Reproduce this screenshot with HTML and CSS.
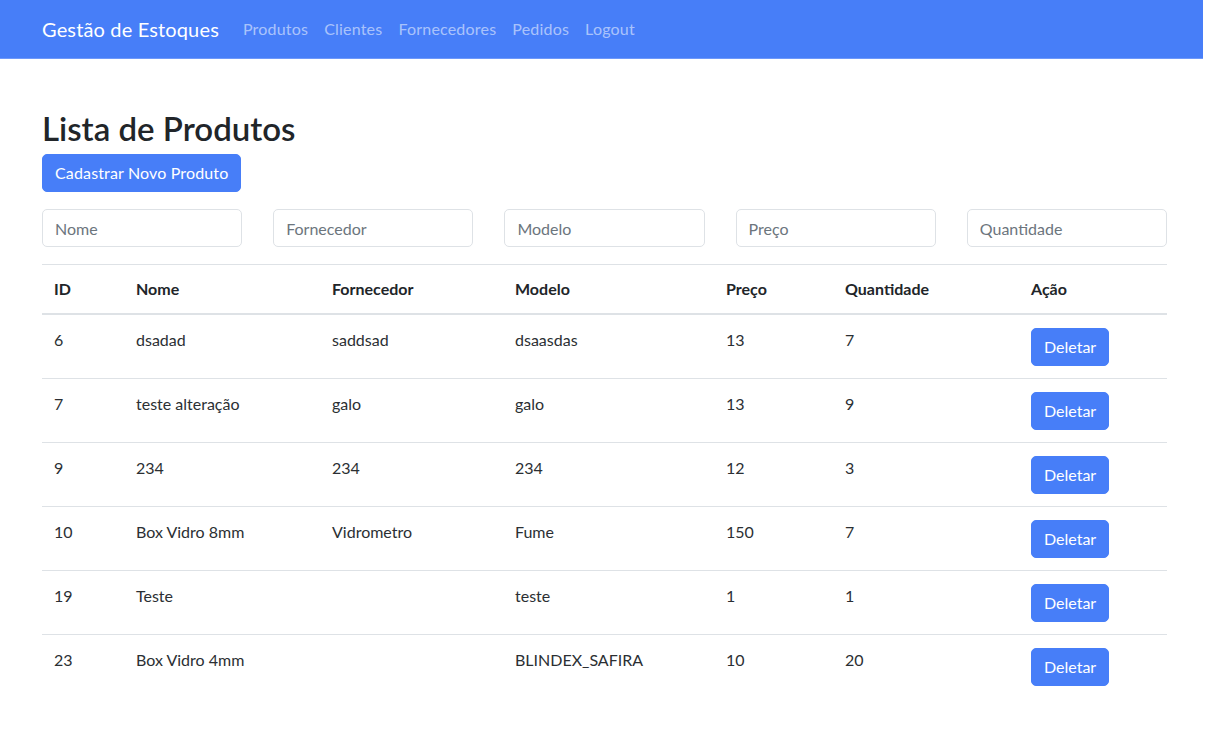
FILE: index.html
```html
<!DOCTYPE html>
<html lang="pt-BR">
<head>
<meta charset="utf-8">
<title>Gestão de Estoques</title>
<link rel="stylesheet" href="styles.css">
</head>
<body>
<nav class="navbar">
  <a class="brand" href="#">Gestão de Estoques</a>
  <ul class="nav-links">
    <li><a href="#">Produtos</a></li>
    <li><a href="#">Clientes</a></li>
    <li><a href="#">Fornecedores</a></li>
    <li><a href="#">Pedidos</a></li>
    <li><a href="#">Logout</a></li>
  </ul>
</nav>
<main class="container">
  <h1 class="title">Lista de Produtos</h1>
  <button class="btn btn-primary">Cadastrar Novo Produto</button>
  <div class="filters">
    <input class="field" type="text" placeholder="Nome">
    <input class="field" type="text" placeholder="Fornecedor">
    <input class="field" type="text" placeholder="Modelo">
    <input class="field" type="text" placeholder="Preço">
    <input class="field" type="text" placeholder="Quantidade">
  </div>
  <table class="table">
    <thead>
      <tr>
        <th class="c-id">ID</th>
        <th class="c-nome">Nome</th>
        <th class="c-forn">Fornecedor</th>
        <th class="c-modelo">Modelo</th>
        <th class="c-preco">Preço</th>
        <th class="c-qtd">Quantidade</th>
        <th class="c-acao">Ação</th>
      </tr>
    </thead>
    <tbody>
      <tr><td>6</td><td>dsadad</td><td>saddsad</td><td>dsaasdas</td><td>13</td><td>7</td><td><button class="btn btn-primary">Deletar</button></td></tr>
      <tr><td>7</td><td>teste alteração</td><td>galo</td><td>galo</td><td>13</td><td>9</td><td><button class="btn btn-primary">Deletar</button></td></tr>
      <tr><td>9</td><td>234</td><td>234</td><td>234</td><td>12</td><td>3</td><td><button class="btn btn-primary">Deletar</button></td></tr>
      <tr><td>10</td><td>Box Vidro 8mm</td><td>Vidrometro</td><td>Fume</td><td>150</td><td>7</td><td><button class="btn btn-primary">Deletar</button></td></tr>
      <tr><td>19</td><td>Teste</td><td></td><td>teste</td><td>1</td><td>1</td><td><button class="btn btn-primary">Deletar</button></td></tr>
      <tr><td>23</td><td>Box Vidro 4mm</td><td></td><td>BLINDEX_SAFIRA</td><td>10</td><td>20</td><td><button class="btn btn-primary">Deletar</button></td></tr>
    </tbody>
  </table>
</main>
</body>
</html>
```
FILE: styles.css
```css
* { box-sizing: border-box; }

html, body {
  margin: 0;
  padding: 0;
  background: #fff;
}

body {
  font-family: "Segoe UI", Lato, "Noto Sans", sans-serif;
  font-size: 16px;
  line-height: 1.5;
  color: #212529;
  width: 1203px;
}

.navbar {
  display: flex;
  align-items: center;
  height: 59px;
  padding: 0 0 1px 42px;
  background: #477ef8;
  border-bottom: 1px solid #6e98fa;
}

.brand {
  font-size: 20px;
  letter-spacing: 0.15px;
  color: #fff;
  text-decoration: none;
  margin-right: 16px;
}

.nav-links {
  display: flex;
  list-style: none;
  margin: 0;
  padding: 0;
}

.nav-links a {
  display: block;
  padding: 8px;
  letter-spacing: 0.2px;
  color: rgba(255, 255, 255, 0.55);
  text-decoration: none;
}

.container {
  width: 1125px;
  margin-left: 42px;
  padding-top: 49px;
}

.title {
  margin: 0 0 6px;
  font-size: 33px;
  font-weight: 600;
  line-height: 40px;
}

.btn {
  font-family: inherit;
  font-size: 16px;
  line-height: 24px;
  padding: 6px 12px;
  border: 1px solid transparent;
  border-radius: 5px;
  cursor: pointer;
}

.btn-primary {
  background: #477ef8;
  border-color: #477ef8;
  color: #fff;
}

.container > .btn-primary {
  letter-spacing: 0.15px;
}

.filters {
  display: grid;
  grid-template-columns: repeat(5, 1fr);
  gap: 31px;
  margin: 17px 0 17px;
}

.field {
  width: 100%;
  height: 38px;
  font-family: inherit;
  font-size: 16px;
  padding: 6px 12px;
  border: 1px solid #dee2e6;
  border-radius: 5px;
  color: #212529;
}

.field::placeholder {
  color: #6c757d;
}

.table {
  width: 100%;
  table-layout: fixed;
  border-collapse: collapse;
  border-top: 1px solid #dee2e6;
}

.table th,
.table td {
  text-align: left;
  vertical-align: top;
  padding: 12px;
}

.table th {
  font-weight: 700;
  border-bottom: 2px solid #dee2e6;
}

.table td {
  padding-top: 13px;
  color: #2b2f33;
  border-bottom: 1px solid #dee2e6;
}

.table tbody tr:last-child td {
  border-bottom: none;
}

.c-id { width: 82px; }
.c-nome { width: 196px; }
.c-forn { width: 183px; }
.c-modelo { width: 211px; }
.c-preco { width: 119px; }
.c-qtd { width: 186px; }
.c-acao { width: 148px; }
```
